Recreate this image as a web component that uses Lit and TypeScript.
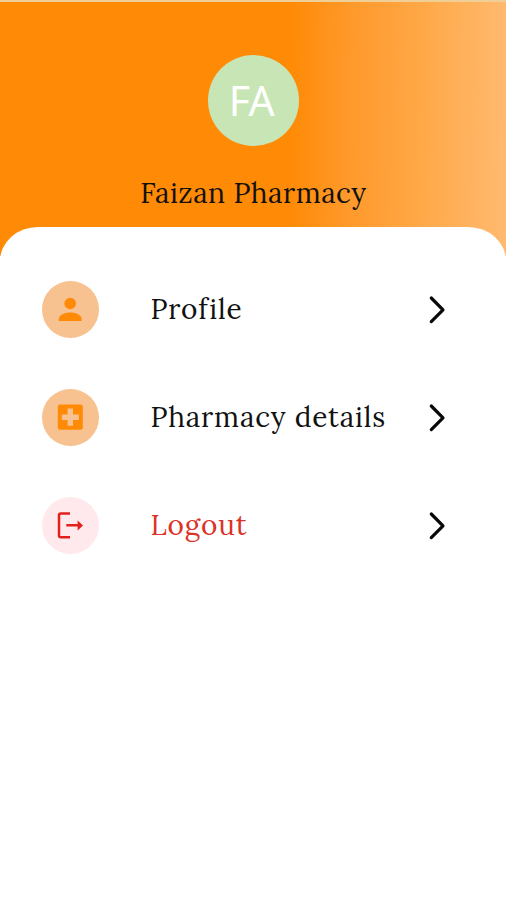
import { LitElement, html, svg, css } from "lit";
import { customElement } from "lit/decorators.js";

const icons = {
  profile: svg`<circle cx="14.2" cy="8.5" r="5.8"/><path d="M2.8 25.9v-1.8c0-3.9 5.9-6.5 11.4-6.5s11.4 2.6 11.4 6.5v1.8z"/>`,
  details: svg`<path fill-rule="evenodd" d="M4 1.6h20.6a2.2 2.2 0 0 1 2.2 2.2v20.8a2.2 2.2 0 0 1-2.2 2.2H4a2.2 2.2 0 0 1-2.2-2.2V3.8A2.2 2.2 0 0 1 4 1.6zM11.6 5.6v5.8H5.8v5.6h5.8v5.8h5.4V17h5.8v-5.6H17V5.6z"/>`,
  logout: svg`<path fill="none" stroke="currentColor" stroke-width="2.5" stroke-linejoin="round" d="M14 2.6H4.8A1.8 1.8 0 0 0 3 4.4v20A1.8 1.8 0 0 0 4.8 26.2H14"/><path d="M10.3 13.1h11.3V9.4l5.4 5-5.4 5v-3.8H10.3z"/>`,
};

const items = [
  { id: "profile", label: "Profile", icon: icons.profile },
  { id: "details", label: "Pharmacy details", icon: icons.details },
  { id: "logout", label: "Logout", icon: icons.logout },
];

@customElement("app-root")
export class AppRoot extends LitElement {
  static styles = css`
    :host {
      display: block;
      height: 900px;
      overflow: hidden;
      background: #fff;
      font-family: Lora, "Liberation Serif", serif;
      color: #111;
    }
    .header {
      box-sizing: border-box;
      height: 256px;
      border-top: 2px solid #f0cf96;
      padding-top: 53px;
      display: flex;
      flex-direction: column;
      align-items: center;
      background: linear-gradient(91deg, #ff8a05 0%, #ff8a05 57%, #ff9829 68%, #ffa745 82%, #ffba70 100%);
    }
    .avatar {
      width: 91px;
      height: 91px;
      margin-left: 1px;
      border-radius: 50%;
      background: #c8e6b5;
      color: #fff;
      display: flex;
      align-items: center;
      justify-content: center;
      font: 41px/91px "Noto Sans", sans-serif;
    }
    .initials {
      margin-right: 4px;
      letter-spacing: -0.5px;
    }
    .name {
      margin: 30px 0 0 1px;
      font-size: 28px;
      line-height: 34px;
      font-weight: 400;
      letter-spacing: 0.5px;
      white-space: nowrap;
    }
    .panel {
      position: relative;
      margin-top: -29px;
      min-height: 673px;
      box-sizing: border-box;
      border-radius: 38px 38px 0 0 / 34px 34px 0 0;
      background: #fff;
      padding: 54px 58px 0 42px;
      display: flex;
      flex-direction: column;
      gap: 51px;
    }
    .row {
      height: 57px;
      display: flex;
      align-items: center;
    }
    .badge {
      width: 57px;
      height: 57px;
      border-radius: 50%;
      background: #f8c190;
      color: #ff8a05;
      display: flex;
      align-items: center;
      justify-content: center;
    }
    .glyph {
      width: 29px;
      height: 29px;
      fill: currentColor;
    }
    .label {
      flex: 1;
      margin-left: 51.5px;
      padding-bottom: 1px;
      font-size: 28px;
      line-height: 36px;
      letter-spacing: 0.85px;
      white-space: nowrap;
    }
    .logout .label { color: #dc3329; }
    .logout .badge { background: #ffe9ec; color: #e3211b; }
    .chevron {
      width: 22px;
      height: 30px;
      fill: none;
      stroke: #080808;
      stroke-width: 3.2;
      stroke-linecap: round;
      stroke-linejoin: round;
    }
  `;

  render() {
    return html`
      <header class="header">
        <div class="avatar"><span class="initials">FA</span></div>
        <h1 class="name">Faizan Pharmacy</h1>
      </header>
      <main class="panel">
        ${items.map(
          (item) => html`
            <div class="row ${item.id}">
              <span class="badge"><svg class="glyph" viewBox="0 0 29 29">${item.icon}</svg></span>
              <span class="label">${item.label}</span>
              <svg class="chevron" viewBox="0 0 22 30"><path d="M5.3 3 17 14.8 5.3 26.6"/></svg>
            </div>
          `
        )}
      </main>
    `;
  }
}
